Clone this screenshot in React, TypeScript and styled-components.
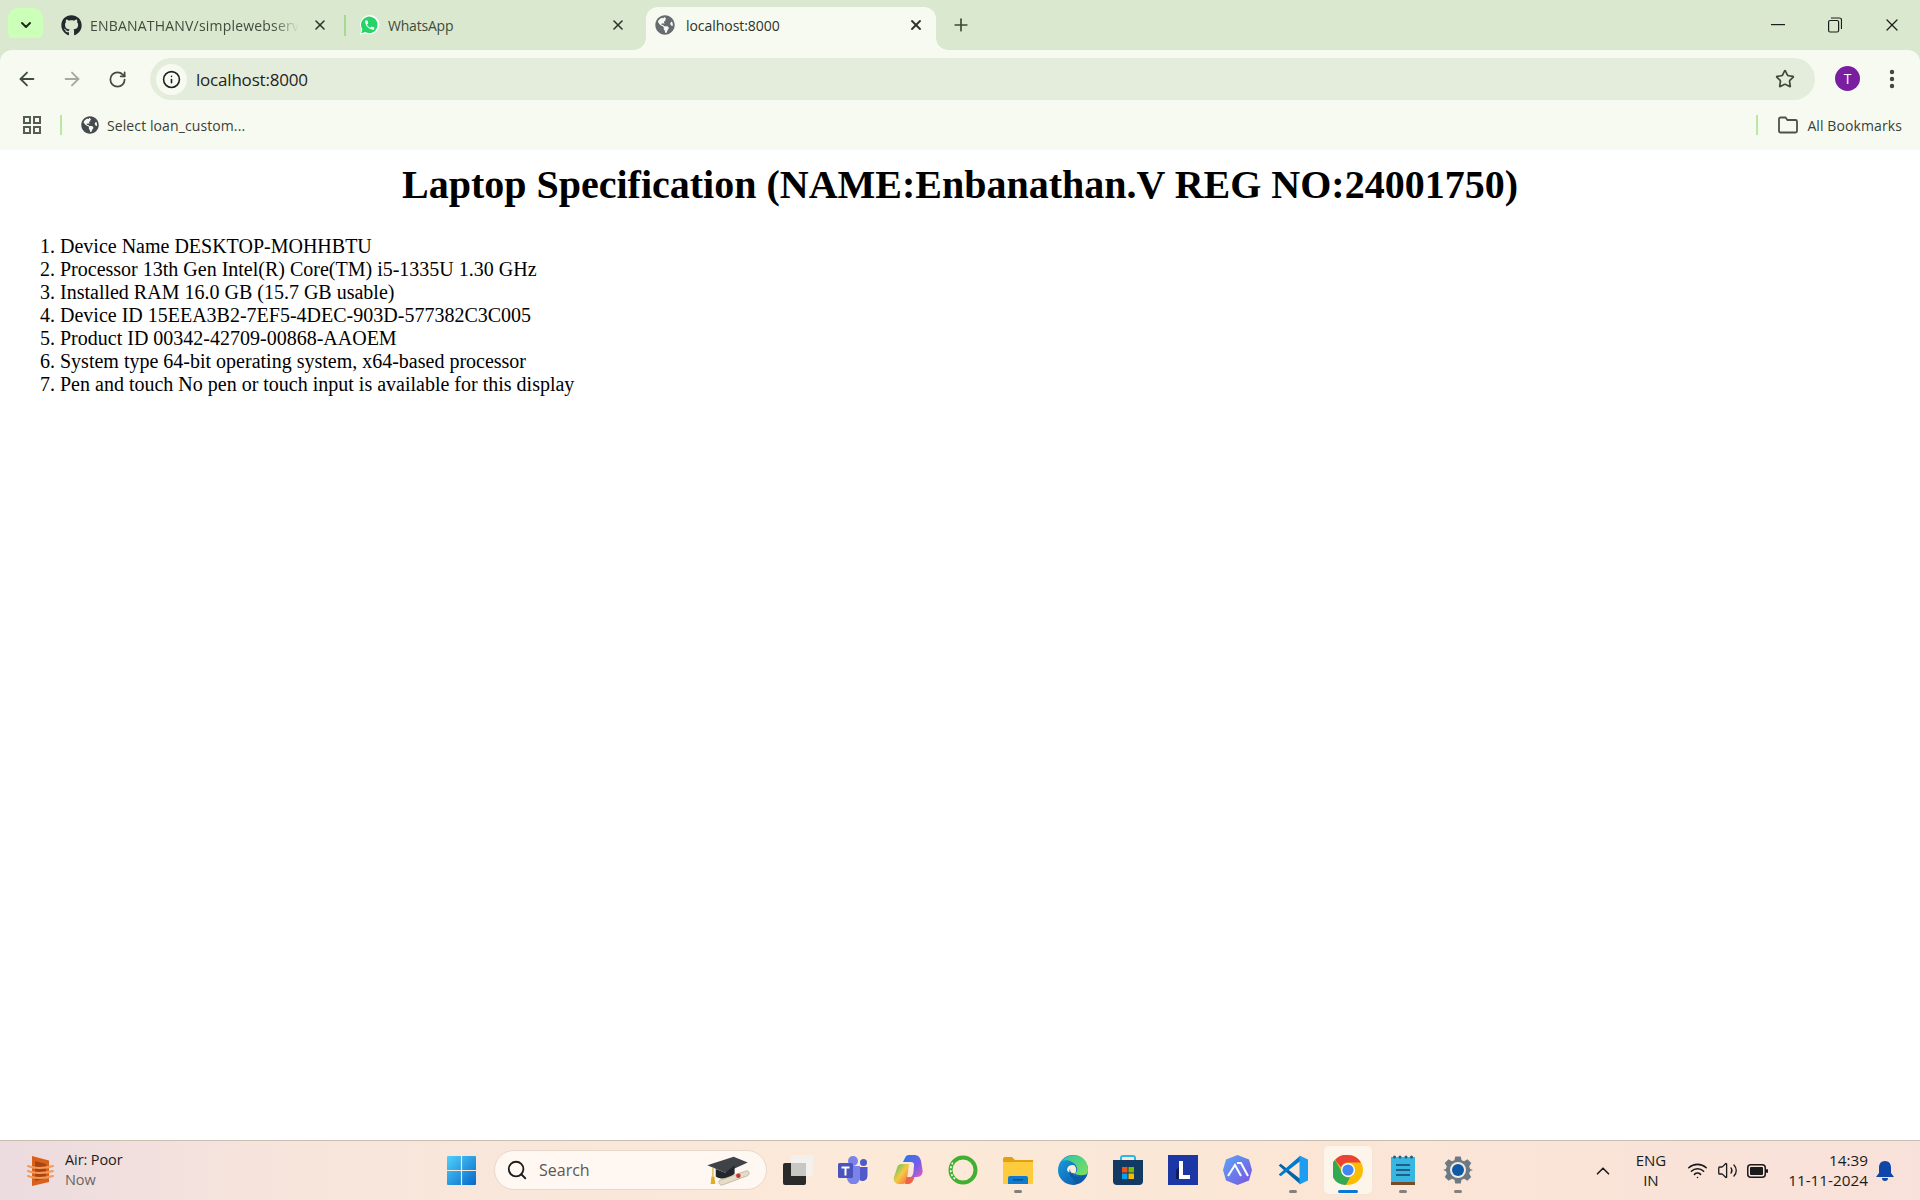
import { memo, ReactNode } from 'react';
import styled, { createGlobalStyle } from 'styled-components';
import {
    ArrowLeft,
    ArrowRight,
    ChevronDown,
    ChevronUp,
    Info,
    MoreVertical,
    Plus,
    RotateCw,
    Search,
    Star,
    Volume2,
    Wifi,
    X,
} from 'lucide-react';
import { FaGithub, FaGlobeAmericas } from 'react-icons/fa';

const UI_FONT = '"Open Sans", "Noto Sans", "Liberation Sans", sans-serif';

const GlobalStyle = createGlobalStyle`
    html, body {
        margin: 0;
        padding: 0;
    }

    body {
        font-family: ${UI_FONT};
        overflow: hidden;
    }
`;

const Screen = styled.div`
    width: 1920px;
    height: 1200px;
    display: flex;
    flex-direction: column;
    overflow: hidden;
    background-color: #ffffff;
`;

/* browser chrome */
const TabStrip = styled.div`
    height: 50px;
    flex: none;
    padding-left: 8px;
    display: flex;
    align-items: flex-start;
    background-color: #d9e8ce;
`;

const ListButton = styled.div`
    width: 35px;
    height: 34px;
    margin-top: 8px;
    margin-right: 5px;
    flex: none;
    display: flex;
    align-items: center;
    justify-content: center;
    border-radius: 10px;
    background-color: #ccffb8;
    color: #1f2a1c;
`;

const Tab = styled.div<{ $active?: boolean; $width: number }>`
    position: relative;
    width: ${({ $width }) => $width}px;
    height: 43px;
    margin-top: 7px;
    margin-left: ${({ $active }) => ($active ? 4 : 0)}px;
    padding: 0 ${({ $active }) => ($active ? 10 : 14)}px 7px ${({ $active }) => ($active ? 8 : 12)}px;
    box-sizing: border-box;
    flex: none;
    display: flex;
    align-items: center;
    border-radius: 12px 12px 0 0;
    background-color: ${({ $active }) => ($active ? '#f7faf1' : 'transparent')};

    ${({ $active }) => $active && `
        &::before, &::after {
            content: '';
            position: absolute;
            bottom: 0;
            width: 12px;
            height: 12px;
            background: radial-gradient(circle at var(--flare-x) 0, #d9e8ce 11.5px, #f7faf1 12px);
        }

        &::before {
            --flare-x: 0;
            left: -12px;
        }

        &::after {
            --flare-x: 100%;
            right: -12px;
        }
    `}
`;

const TabIcon = styled.span<{ $active?: boolean }>`
    width: 22px;
    height: 22px;
    margin-right: ${({ $active }) => ($active ? 10 : 8)}px;
    flex: none;
    display: flex;
    align-items: center;
    justify-content: center;
`;

const TabTitle = styled.span<{ $active?: boolean; $fade?: boolean }>`
    flex: 1;
    min-width: 0;
    white-space: nowrap;
    font-size: 14px;
    letter-spacing: ${({ $active, $fade }) => ($fade ? '0.2px' : $active ? '-0.05px' : '-0.2px')};
    color: ${({ $active }) => ($active ? '#2a3327' : '#414c3c')};
    ${({ $fade }) => $fade && `
        -webkit-mask-image: linear-gradient(to right, #000 83%, transparent 95%);
        mask-image: linear-gradient(to right, #000 83%, transparent 95%);
    `}
`;

const TabClose = styled.span`
    width: 20px;
    flex: none;
    display: flex;
    justify-content: center;
    color: #2e362b;
`;

const TabDivider = styled.span`
    width: 2px;
    height: 21px;
    margin-top: 15px;
    flex: none;
    background-color: #a9d893;
`;

const NewTab = styled.span`
    width: 36px;
    height: 36px;
    margin-top: 7px;
    margin-left: 7px;
    flex: none;
    display: flex;
    align-items: center;
    justify-content: center;
    color: #3b4a36;
`;

const WindowControls = styled.div`
    margin-left: auto;
    height: 50px;
    display: flex;
`;

const WindowButton = styled.span`
    width: 57px;
    display: flex;
    align-items: center;
    justify-content: center;
    color: #1d1d1d;
`;

const ChromeBody = styled.div`
    flex: none;
    border-radius: 12px 12px 0 0;
    background-color: #f7faf1;
    box-shadow: 0 -12px 0 0 #d9e8ce;
`;

const Toolbar = styled.div`
    height: 50px;
    padding: 8px 5px 0 4.500px;
    box-sizing: border-box;
    display: flex;
    align-items: flex-start;
`;

const NavButton = styled.span<{ $disabled?: boolean }>`
    width: 45px;
    height: 42px;
    flex: none;
    display: flex;
    align-items: center;
    justify-content: center;
    color: ${({ $disabled }) => ($disabled ? '#a3ab9e' : '#424c3e')};
`;

const AddressBar = styled.div`
    width: 1665px;
    height: 42px;
    margin-left: 10.500px;
    padding: 0 20px 0 6px;
    box-sizing: border-box;
    flex: none;
    display: flex;
    align-items: center;
    border-radius: 21px;
    background-color: #e4eddb;
`;

const SiteInfo = styled.span`
    width: 31px;
    height: 31px;
    flex: none;
    display: flex;
    align-items: center;
    justify-content: center;
    border-radius: 50%;
    background-color: #f7faf1;
    color: #1f1f1f;
`;

const AddressText = styled.span`
    margin-left: 9px;
    font-size: 17px;
    letter-spacing: -0.2px;
    color: #1f1f1f;
`;

const BarStar = styled.span`
    margin-left: auto;
    display: flex;
    color: #3e473a;
`;

const Avatar = styled.span`
    width: 25px;
    height: 25px;
    margin-top: 8px;
    margin-left: 20px;
    flex: none;
    display: flex;
    align-items: center;
    justify-content: center;
    border-radius: 50%;
    background-color: #7a1ea1;
    color: #ffffff;
    font-size: 14px;
`;

const MenuButton = styled.span`
    margin-top: 9px;
    margin-left: 20px;
    display: flex;
    color: #3e473a;
`;

const BookmarkBar = styled.div`
    height: 50px;
    padding: 0 18px 0 23px;
    box-sizing: border-box;
    display: flex;
    align-items: center;
`;

const AppsIcon = styled.span`
    display: flex;
    color: #555c52;
`;

const BarDivider = styled.span<{ $gap: number }>`
    width: 2px;
    height: 20px;
    margin: 0 ${({ $gap }) => $gap}px;
    flex: none;
    background-color: #b8e9a0;
`;

const BookmarkLabel = styled.span<{ $gap: number }>`
    margin-left: ${({ $gap }) => $gap}px;
    font-size: 14px;
    letter-spacing: 0.1px;
    color: #3a4136;
`;

const BookmarkSpacer = styled.span`
    flex: 1;
`;

/* page */
const Page = styled.main`
    flex: 1;
    min-height: 0;
    padding: 12px 10px 0;
    font-family: "Liberation Serif", "Times New Roman", serif;
    color: #000000;
`;

const Heading = styled.h1`
    margin: 0 0 27px;
    font-size: 40px;
    line-height: 46px;
    font-weight: 700;
    text-align: center;
`;

const SpecList = styled.ol`
    margin: 0;
    padding-left: 50px;
    font-size: 20px;
    line-height: 23px;
`;

/* taskbar */
const Taskbar = styled.footer`
    height: 60px;
    flex: none;
    box-sizing: border-box;
    display: flex;
    align-items: stretch;
    border-top: 1px solid #cabdb2;
    background: linear-gradient(90deg, #ecdbdf 0%, #f7e5dc 15%, #fce9d8 45%, #fbe6d6 70%, #f8e1da 100%);
`;

const Weather = styled.div`
    width: 434px;
    padding-left: 27px;
    box-sizing: border-box;
    flex: none;
    display: flex;
    align-items: center;
    gap: 11px;
`;

const WeatherText = styled.div`
    padding-bottom: 2px;
    display: flex;
    flex-direction: column;
    font-size: 14.500px;
    line-height: 20px;
    color: #1c1c1c;
    letter-spacing: -0.1px;

    > span + span {
        color: #6b6560;
    }
`;

const SearchBox = styled.div`
    width: 273px;
    height: 40px;
    margin: 9px 3px 0 5px;
    padding: 0 14px 0 11px;
    box-sizing: border-box;
    flex: none;
    display: flex;
    align-items: center;
    border: 1px solid #e6d9cc;
    border-radius: 20px;
    background-color: #fff8f2;
    font-size: 16px;
    color: #5a5654;
`;

const SearchLabel = styled.span`
    margin-left: 11px;
    margin-right: auto;
`;

const TaskItem = styled.div<{ $active?: boolean }>`
    position: relative;
    width: 55px;
    height: 48px;
    margin-top: 5px;
    flex: none;
    display: flex;
    align-items: center;
    justify-content: center;

    ${({ $active }) => $active && `
        &::before {
            content: '';
            position: absolute;
            top: 0;
            bottom: 0;
            left: 4px;
            right: 3px;
            border-radius: 5px;
            background-color: #fdf4ea;
            box-shadow: 0 0 0 1px #f3e6d8;
        }
        > svg {
            position: relative;
        }
    `}
`;

const RunningDot = styled.span<{ $active?: boolean }>`
    position: absolute;
    bottom: 1px;
    left: 50%;
    width: ${({ $active }) => ($active ? 20 : 8)}px;
    height: 3px;
    transform: translateX(-50%);
    border-radius: 2px;
    background-color: ${({ $active }) => ($active ? '#0a78d4' : '#85807b')};
`;

const Tray = styled.div`
    margin-left: auto;
    padding-right: 26px;
    display: flex;
    align-items: center;
    color: #1b1b1b;
`;

const LangBlock = styled.div`
    margin: 0 21px 0 22px;
    padding-bottom: 1px;
    font-size: 15px;
    line-height: 20px;
    text-align: center;
`;

const TrayIcons = styled.div`
    display: flex;
    align-items: center;
    gap: 9px;
`;

const ClockBlock = styled.div`
    margin: 0 8px 0 20px;
    padding-bottom: 2px;
    font-size: 15.300px;
    line-height: 20px;
    text-align: right;
`;

/* brand drawings */
function WhatsAppIcon() {
    return (
        <svg width="21" height="22" viewBox="0 0 24 24">
            <path fill="#ffffff" d="M1 23l1.7-6A11 11 0 1 1 7 21.3z" />
            <path fill="#25d366" d="M2.6 21.3l1.2-4.5A9.4 9.4 0 1 1 7.2 20z" />
            <path
                fill="#ffffff"
                transform="translate(5.2 5.2) scale(0.58)"
                d="M6.62 10.79c1.44 2.83 3.76 5.14 6.59 6.59l2.2-2.2c.27-.27.67-.36 1.02-.24 1.12.37 2.33.57 3.57.57.55 0 1 .45 1 1V20c0 .55-.45 1-1 1-9.39 0-17-7.61-17-17 0-.55.45-1 1-1h3.5c.55 0 1 .45 1 1 0 1.25.2 2.45.57 3.57.11.35.03.74-.25 1.02l-2.2 2.2z" />
        </svg>
    );
}

function AppsGridIcon() {
    return (
        <svg width="18" height="18" viewBox="0 0 18 18" fill="none" stroke="currentColor" strokeWidth="2">
            <rect x="1" y="1" width="6" height="6" />
            <rect x="11" y="1" width="6" height="6" />
            <rect x="1" y="11" width="6" height="6" />
            <rect x="11" y="11" width="6" height="6" />
        </svg>
    );
}

function RestoreIcon() {
    return (
        <svg width="14" height="16" viewBox="0 0 14 16" fill="none" stroke="currentColor" strokeWidth="1.200">
            <rect x="0.600" y="3.500" width="10" height="11.500" rx="1.500" />
            <path d="M3 1h8.500a2 2 0 0 1 2 2v9" />
        </svg>
    );
}

function BookmarkFolderIcon() {
    return (
        <svg width="20" height="18" viewBox="0 0 20 18" fill="none" stroke="#4b5247" strokeWidth="1.800">
            <path d="M1 3a1.500 1.500 0 0 1 1.500-1.500h5l2 2.500h8A1.500 1.500 0 0 1 19 5.500V15a1.500 1.500 0 0 1-1.500 1.500h-15A1.500 1.500 0 0 1 1 15z" />
        </svg>
    );
}

function AirIcon() {
    return (
        <svg width="27" height="32" viewBox="0 0 27 32">
            <path fill="#d9601a" d="M5 1l17 4.500V27L5 31z" />
            <path fill="#a8450f" d="M8 6l11 3v14L8 26z" />
            <g fill="none" stroke="#f29a5c" strokeWidth="2" strokeLinecap="round">
                <path d="M1 11c5 2.500 18 2.500 25 0" />
                <path d="M1 16c5 2.500 18 2.500 25 0" />
                <path d="M1 21c5 2.500 18 2.500 25 0" />
            </g>
        </svg>
    );
}

function WindowsLogo() {
    return (
        <svg width="29" height="29" viewBox="0 0 29 29">
            <defs>
                <linearGradient id="winLogo" x1="0" y1="0" x2="1" y2="1">
                    <stop offset="0" stopColor="#4fd0fb" />
                    <stop offset="1" stopColor="#0669c9" />
                </linearGradient>
            </defs>
            <path fill="url(#winLogo)" d="M0 1a1 1 0 0 1 1-1h12.900v13.900H0zM15.100 0H28a1 1 0 0 1 1 1v12.900H15.100zM0 15.100h13.900V29H1a1 1 0 0 1-1-1zM15.100 15.100H29V28a1 1 0 0 1-1 1H15.100z" />
        </svg>
    );
}

function GraduationIcon() {
    return (
        <svg width="48" height="32" viewBox="0 0 50 34">
            <path fill="#3f4347" d="M3 12L31 3l15 6-24 11z" />
            <path fill="#23272b" d="M12 16v8c6 4 14 2 20-3v-9l-10 8z" />
            <path fill="none" stroke="#d9a520" strokeWidth="1.200" d="M9 14v10" />
            <path fill="#e1ae22" d="M7.500 24h3l1 8h-5z" />
            <path fill="#e4dcc6" stroke="#a89c80" strokeWidth="0.600" d="M16 28l28-10c3-1 5 3 2 5L19 33c-3 1-5-4-3-5z" />
            <circle cx="36" cy="23" r="2.400" fill="#c8352c" />
        </svg>
    );
}

function TaskViewIcon() {
    return (
        <svg width="30" height="30" viewBox="0 0 30 30">
            <rect x="0" y="8" width="23" height="22" rx="2" fill="#2a2a2a" />
            <rect x="8" y="0" width="22" height="21" rx="1" fill="#f3f1ee" />
            <rect x="8" y="8" width="15" height="13" fill="#c9c7c4" />
        </svg>
    );
}

function TeamsIcon() {
    return (
        <svg width="30" height="28" viewBox="0 0 30 28">
            <circle cx="15" cy="5" r="5" fill="#7b83eb" />
            <circle cx="25.500" cy="6.500" r="3.500" fill="#5059c9" />
            <path fill="#5059c9" d="M20 11h9.500v9a5 5 0 0 1-8 4z" />
            <path fill="#7b83eb" d="M8 10h14v12a6.500 6.500 0 0 1-13 0z" />
            <rect x="0" y="7" width="15" height="15" rx="1.500" fill="#4b53bc" />
            <path fill="#ffffff" d="M3.500 10.500h8v2h-3v7h-2v-7h-3z" />
        </svg>
    );
}

function CopilotIcon() {
    return (
        <svg width="30" height="30" viewBox="0 0 30 30">
            <defs>
                <linearGradient id="copilotA" x1="0" y1="0" x2="1" y2="1">
                    <stop offset="0" stopColor="#1a7fe8" />
                    <stop offset="0.600" stopColor="#7b5be6" />
                    <stop offset="1" stopColor="#e05fc0" />
                </linearGradient>
                <linearGradient id="copilotB" x1="0" y1="0" x2="1" y2="1">
                    <stop offset="0" stopColor="#35c46a" />
                    <stop offset="0.500" stopColor="#f6c945" />
                    <stop offset="1" stopColor="#f2643c" />
                </linearGradient>
            </defs>
            <path fill="url(#copilotB)" d="M9 9h7l-2 15c-.4 3-2 5-5 5H6c-4 0-6-3-5-7l3-9c.7-2.500 2.500-4 5-4z" />
            <path fill="url(#copilotA)" d="M12 3c.6-1.800 2-3 4-3h5c4 0 6 2 7 6l1.500 9c.6 4-1.500 7-5.500 7h-6c1.500-1 2-3 2.500-5l.5-7c.2-2-1-3-3-3h-8z" />
            <path fill="#f0624a" d="M12 29l1.500-7h8c-1 3-2.500 7-6 7z" />
        </svg>
    );
}

function RingIcon() {
    return (
        <svg width="30" height="30" viewBox="0 0 30 30" fill="none">
            <circle cx="15" cy="15" r="12.500" stroke="#3fb02f" strokeWidth="4" />
            <path d="M7 24C2 20 1 12 6 6" stroke="#ffffff" strokeWidth="1.600" strokeDasharray="2 2" />
        </svg>
    );
}

function FolderAppIcon() {
    return (
        <svg width="30" height="27" viewBox="0 0 30 27">
            <path fill="#e0a010" d="M0 2a2 2 0 0 1 2-2h7l3 3h18v6H0z" />
            <path fill="#fdcb3d" d="M0 5h30v21a1 1 0 0 1-1 1H1a1 1 0 0 1-1-1z" />
            <path fill="#0f7bd0" d="M5 21a2 2 0 0 1 2-2h16a2 2 0 0 1 2 2v6H5z" />
            <rect x="10" y="22" width="10" height="1.500" fill="#0a4d8a" />
        </svg>
    );
}

function EdgeIcon() {
    return (
        <svg width="30" height="30" viewBox="0 0 30 30">
            <defs>
                <linearGradient id="edgeA" x1="0" y1="0" x2="1" y2="1">
                    <stop offset="0" stopColor="#30c7a0" />
                    <stop offset="1" stopColor="#7fe05c" />
                </linearGradient>
                <linearGradient id="edgeB" x1="0" y1="0" x2="1" y2="1">
                    <stop offset="0" stopColor="#1aa0df" />
                    <stop offset="1" stopColor="#0a4fa8" />
                </linearGradient>
            </defs>
            <circle cx="15" cy="15" r="15" fill="url(#edgeB)" />
            <path fill="url(#edgeA)" d="M4 6C8 1 15-1 21 1c6 2 9 8 9 14 0 2-.5 4-2 4.500-3 1-9 1-11-1 2.500-2 3-5 1-8C15 6 8 4 4 6z" />
            <path fill="#fce9d8" d="M17 18.500c-3-1-6 0-7.500-2.500C8 13 11 9.500 15 10c3 .5 4.500 5 2 8.500z" />
            <path fill="#0c59a4" d="M12 14c0 5 5 8 10 7.500 2 0 4-.5 5-1.500-2 5-6 9-12 10 4-2 0-6-2-8-2-3-2-6-1-8z" />
        </svg>
    );
}

function StoreIcon() {
    return (
        <svg width="30" height="30" viewBox="0 0 30 30">
            <path fill="none" stroke="#2ab8ea" strokeWidth="2" d="M8 7V3a2 2 0 0 1 2-2h10a2 2 0 0 1 2 2v4" />
            <path fill="#123a63" d="M0 5h30v21a4 4 0 0 1-4 4H4a4 4 0 0 1-4-4z" />
            <rect x="9" y="12" width="5.500" height="5.500" fill="#f25022" />
            <rect x="15.500" y="12" width="5.500" height="5.500" fill="#7fba00" />
            <rect x="9" y="18.500" width="5.500" height="5.500" fill="#00a4ef" />
            <rect x="15.500" y="18.500" width="5.500" height="5.500" fill="#ffb900" />
        </svg>
    );
}

function LetterTile() {
    return (
        <svg width="30" height="30" viewBox="0 0 30 30">
            <rect width="30" height="30" fill="#1c37a5" />
            <path fill="#ffffff" d="M11 6h4v14h7v4H11z" />
            <path fill="#0f1d5e" d="M11 24V12l-3 3v9z" />
        </svg>
    );
}

function PeakIcon() {
    return (
        <svg width="29" height="30" viewBox="0 0 29 30">
            <defs>
                <linearGradient id="peak" x1="0" y1="0" x2="1" y2="1">
                    <stop offset="0" stopColor="#5aa7f5" />
                    <stop offset="1" stopColor="#7a52e0" />
                </linearGradient>
            </defs>
            <path fill="url(#peak)" d="M14.500 0L26 4.500 29 15l-3 10.500L14.500 30 3 25.500 0 15 3 4.500z" />
            <path fill="none" stroke="#ffffff" strokeWidth="2" d="M5 21l7-11 6 11M14 8l4-0 7 13" />
        </svg>
    );
}

function VsCodeIcon() {
    return (
        <svg width="30" height="30" viewBox="0 0 30 30">
            <path fill="#0065a9" d="M0.700 10.500l2-1.800 19.300 15-0.100 5.300z" />
            <path fill="#007acc" d="M0.700 19.500l2 1.800 19.300-15-0.100-5.300z" />
            <path fill="#1f9cf0" d="M21.500 0.500L30 4.500v21l-8.500 4z" />
        </svg>
    );
}

function ChromeIcon() {
    return (
        <svg width="30" height="30" viewBox="0 0 30 30">
            <circle cx="15" cy="15" r="15" fill="#fbbc04" />
            <path fill="#ea4335" d="M15 0a15 15 0 0 1 13 7.500H15a7.500 7.500 0 0 0-7 4.800L2 4.800A15 15 0 0 1 15 0z" />
            <path fill="#34a853" d="M2 4.800l6.500 11.500a7.500 7.500 0 0 0 8.500 6L13 30A15 15 0 0 1 2 4.800z" />
            <circle cx="15" cy="15" r="7" fill="#ffffff" />
            <circle cx="15" cy="15" r="5.600" fill="#4285f4" />
        </svg>
    );
}

function NotepadIcon() {
    return (
        <svg width="24" height="30" viewBox="0 0 24 30">
            <rect x="0" y="2" width="24" height="26" fill="#36b6e0" />
            <rect x="0" y="27" width="24" height="3" fill="#7a4a24" />
            <g fill="#1d5f86">
                <circle cx="3.500" cy="2" r="1.500" />
                <circle cx="9" cy="2" r="1.500" />
                <circle cx="15" cy="2" r="1.500" />
                <circle cx="20.500" cy="2" r="1.500" />
                <rect x="5" y="9" width="14" height="2" />
                <rect x="5" y="14" width="14" height="2" />
                <rect x="5" y="19" width="14" height="2" />
            </g>
        </svg>
    );
}

function SettingsIcon() {
    return (
        <svg width="30" height="30" viewBox="0 0 30 30">
            <path
                fill="#6d7a86"
                d="M12 0h6l1 4.200 2.800 1.200 3.700-2.300 4.200 4.200-2.300 3.700 1.200 2.800L32 15l-3.400 1.200-1.200 2.800 2.300 3.700-4.200 4.200-3.700-2.300-2.800 1.200L18 30h-6l-1-4.200-2.800-1.200-3.700 2.300-4.200-4.200 2.300-3.700-1.200-2.800L-2 15l3.400-1.200 1.200-2.800L.3 7.300l4.200-4.200 3.700 2.300L11 4.200z"
                transform="translate(1.500 1.500) scale(0.9)" />
            <circle cx="15" cy="15" r="8" fill="#f4ead9" />
            <circle cx="15" cy="15" r="6" fill="#0e5aa8" />
        </svg>
    );
}

function BatteryIcon() {
    return (
        <svg width="21" height="14" viewBox="0 0 21 14">
            <rect x="0.750" y="0.750" width="17.500" height="12.500" rx="3" fill="none" stroke="#1b1b1b" strokeWidth="1.500" />
            <rect x="3" y="3" width="13" height="8" rx="1" fill="#1b1b1b" />
            <rect x="19" y="5" width="2" height="4" rx="1" fill="#1b1b1b" />
        </svg>
    );
}

function BellIcon() {
    return (
        <svg width="18" height="20" viewBox="0 0 18 20">
            <path fill="#0f46a8" d="M9 0c3.800 0 6 2.800 6 6.500V12l3 4H0l3-4V6.500C3 2.800 5.200 0 9 0zM6 17h6a3 3 0 0 1-6 0z" />
        </svg>
    );
}

const specList = [
    'Device Name DESKTOP-MOHHBTU',
    'Processor 13th Gen Intel(R) Core(TM) i5-1335U 1.30 GHz',
    'Installed RAM 16.0 GB (15.7 GB usable)',
    'Device ID 15EEA3B2-7EF5-4DEC-903D-577382C3C005',
    'Product ID 00342-42709-00868-AAOEM',
    'System type 64-bit operating system, x64-based processor',
    'Pen and touch No pen or touch input is available for this display',
];

type TTaskApp = {
    id: string;
    icon: ReactNode;
    running?: boolean;
    active?: boolean;
};

const taskApps: TTaskApp[] = [
    { id: 'taskview', icon: <TaskViewIcon /> },
    { id: 'teams', icon: <TeamsIcon /> },
    { id: 'copilot', icon: <CopilotIcon /> },
    { id: 'ring', icon: <RingIcon /> },
    { id: 'files', icon: <FolderAppIcon />, running: true },
    { id: 'edge', icon: <EdgeIcon /> },
    { id: 'store', icon: <StoreIcon /> },
    { id: 'letter', icon: <LetterTile /> },
    { id: 'peak', icon: <PeakIcon /> },
    { id: 'vscode', icon: <VsCodeIcon />, running: true },
    { id: 'chrome', icon: <ChromeIcon />, running: true, active: true },
    { id: 'notepad', icon: <NotepadIcon />, running: true },
    { id: 'settings', icon: <SettingsIcon />, running: true },
];

function App() {
    return (
        <Screen>
            <GlobalStyle />

            <TabStrip>
                <ListButton>
                    <ChevronDown size={16} strokeWidth={3} />
                </ListButton>
                <Tab $width={296}>
                    <TabIcon>
                        <FaGithub size={21} color="#24292e" />
                    </TabIcon>
                    <TabTitle $fade>ENBANATHANV/simplewebserv</TabTitle>
                    <TabClose>
                        <X size={16} strokeWidth={2.4} />
                    </TabClose>
                </Tab>
                <TabDivider />
                <Tab $width={296}>
                    <TabIcon>
                        <WhatsAppIcon />
                    </TabIcon>
                    <TabTitle>WhatsApp</TabTitle>
                    <TabClose>
                        <X size={16} strokeWidth={2.4} />
                    </TabClose>
                </Tab>
                <Tab $active $width={290}>
                    <TabIcon $active>
                        <FaGlobeAmericas size={20} color="#676c70" />
                    </TabIcon>
                    <TabTitle $active>localhost:8000</TabTitle>
                    <TabClose>
                        <X size={16} strokeWidth={2.8} />
                    </TabClose>
                </Tab>
                <NewTab>
                    <Plus size={20} strokeWidth={2} />
                </NewTab>
                <WindowControls>
                    <WindowButton>
                        <svg width="14" height="2" viewBox="0 0 14 2">
                            <rect width="14" height="1.200" fill="currentColor" />
                        </svg>
                    </WindowButton>
                    <WindowButton>
                        <RestoreIcon />
                    </WindowButton>
                    <WindowButton>
                        <X size={20} strokeWidth={1.500} />
                    </WindowButton>
                </WindowControls>
            </TabStrip>

            <ChromeBody>
                <Toolbar>
                    <NavButton>
                        <ArrowLeft size={22} strokeWidth={2} />
                    </NavButton>
                    <NavButton $disabled>
                        <ArrowRight size={22} strokeWidth={2} />
                    </NavButton>
                    <NavButton>
                        <RotateCw size={19} strokeWidth={2.2} />
                    </NavButton>
                    <AddressBar>
                        <SiteInfo>
                            <Info size={19} strokeWidth={2} />
                        </SiteInfo>
                        <AddressText>localhost:8000</AddressText>
                        <BarStar>
                            <Star size={20} strokeWidth={2} />
                        </BarStar>
                    </AddressBar>
                    <Avatar>T</Avatar>
                    <MenuButton>
                        <MoreVertical size={24} strokeWidth={2.4} />
                    </MenuButton>
                </Toolbar>
                <BookmarkBar>
                    <AppsIcon>
                        <AppsGridIcon />
                    </AppsIcon>
                    <BarDivider $gap={19} />
                    <FaGlobeAmericas size={18} color="#454a4e" />
                    <BookmarkLabel $gap={8}>Select loan_custom...</BookmarkLabel>
                    <BookmarkSpacer />
                    <BarDivider $gap={20} />
                    <BookmarkFolderIcon />
                    <BookmarkLabel $gap={9}>All Bookmarks</BookmarkLabel>
                </BookmarkBar>
            </ChromeBody>

            <Page>
                <Heading>Laptop Specification (NAME:Enbanathan.V REG NO:24001750)</Heading>
                <SpecList>
                    {specList.map(spec => (
                        <li key={spec}>{spec}</li>
                    ))}
                </SpecList>
            </Page>

            <Taskbar>
                <Weather>
                    <AirIcon />
                    <WeatherText>
                        <span>Air: Poor</span>
                        <span>Now</span>
                    </WeatherText>
                </Weather>
                <TaskItem>
                    <WindowsLogo />
                </TaskItem>
                <SearchBox>
                    <Search size={22} strokeWidth={2} color="#1c1c1c" />
                    <SearchLabel>Search</SearchLabel>
                    <GraduationIcon />
                </SearchBox>
                {taskApps.map(app => (
                    <TaskItem key={app.id} $active={app.active}>
                        {app.icon}
                        {app.running && <RunningDot $active={app.active} />}
                    </TaskItem>
                ))}
                <Tray>
                    <ChevronUp size={22} strokeWidth={1.800} />
                    <LangBlock>
                        ENG
                        <br />
                        IN
                    </LangBlock>
                    <TrayIcons>
                        <Wifi size={21} strokeWidth={1.800} />
                        <Volume2 size={21} strokeWidth={1.500} />
                        <BatteryIcon />
                    </TrayIcons>
                    <ClockBlock>
                        14:39
                        <br />
                        11-11-2024
                    </ClockBlock>
                    <BellIcon />
                </Tray>
            </Taskbar>
        </Screen>
    );
}

export default memo(App);
